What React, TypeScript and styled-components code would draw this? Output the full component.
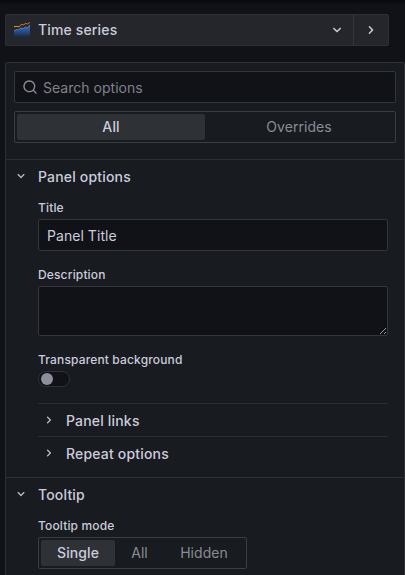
import React from 'react';
import styled, { createGlobalStyle, css } from 'styled-components';

const GlobalStyle = createGlobalStyle`
  *, *::before, *::after { box-sizing: border-box; }
  body {
    margin: 0;
    background: #111217;
    color: rgb(204, 204, 220);
    font-family: Inter, "Liberation Sans", sans-serif;
    font-size: 14px;
    line-height: 22px;
    letter-spacing: 0.15px;
    overflow: hidden;
  }
`;

const Page = styled.div`
  height: 575px;
  padding: 14px 0 0 5px;
  display: flex;
  flex-direction: column;
  gap: 16px;
  overflow: hidden;
  background: linear-gradient(#08090c, #111217 5px);
`;

const VizBar = styled.div`
  display: flex;
  flex: none;
  width: 384px;
  height: 32px;
  border: 1px solid #2e3036;
  border-radius: 2px;
  background: #24262b;
`;

const VizPicker = styled.button`
  flex: 1;
  display: flex;
  align-items: center;
  padding: 0 7px 0 8px;
  border: 0;
  background: none;
  color: inherit;
  font: inherit;
  font-weight: 500;
  letter-spacing: inherit;
  text-align: left;
`;

const VizName = styled.span`
  flex: 1;
  margin-left: 8px;
`;

const CollapseButton = styled.button`
  width: 35px;
  display: flex;
  align-items: center;
  justify-content: center;
  padding: 0;
  border: 0;
  border-left: 1px solid #34363c;
  background: none;
  color: inherit;
`;

const Panel = styled.div`
  flex: none;
  width: 400px;
  height: 520px;
  border: 1px solid #2d2f35;
  border-radius: 2px 2px 0 0;
  background: #181b1f;
`;

const Filters = styled.div`
  display: flex;
  flex-direction: column;
  gap: 8px;
  height: 96px;
  padding: 8px;
`;

const field = css`
  border: 1px solid #34363b;
  border-radius: 2px;
  background: #111217;
`;

const SearchBox = styled.label`
  ${field}
  display: flex;
  align-items: center;
  gap: 5px;
  height: 32px;
  width: 382px;
  flex: none;
  padding: 0 7px;
`;

const SearchInput = styled.input`
  flex: 1;
  padding: 2px 0 0;
  border: 0;
  outline: 0;
  background: none;
  color: inherit;
  font: inherit;
  letter-spacing: 0.02px;
  &::placeholder { color: #80818c; opacity: 1; }
`;

const RadioGroup = styled.div<{ $full?: boolean }>`
  display: flex;
  width: ${p => (p.$full ? '382px' : '209px')};
  height: 32px;
  flex: none;
  margin-top: ${p => (p.$full ? 0 : 1)}px;
  padding: 2px;
  border: 1px solid #3b3d43;
  border-radius: 2px;
`;

const RadioOption = styled.button<{ $active?: boolean; $width: number }>`
  width: ${p => p.$width}px;
  flex: none;
  padding: 0;
  border: 0;
  border-radius: 2px;
  background: ${p => (p.$active ? '#2e3136' : 'transparent')};
  color: ${p => (p.$active ? 'rgb(204, 204, 220)' : '#8b8c96')};
  font: inherit;
  font-weight: ${p => (p.$active ? 500 : 400)};
  letter-spacing: ${p => (p.$active ? 0.1 : 0.05)}px;
`;

const Section = styled.section`
  border-top: 1px solid #2d2f35;
`;

const SectionHeader = styled.header`
  display: flex;
  align-items: center;
  gap: 9px;
  height: 34px;
  padding-left: 7px;
  font-weight: 500;
  letter-spacing: 0.18px;
  svg { margin-bottom: 2px; }
`;

const SectionBody = styled.div`
  padding: 4px 16px 8px 32px;
`;

const Field = styled.div<{ $gap?: number }>`
  display: flex;
  flex-direction: column;
  align-items: flex-start;
  margin-bottom: ${p => p.$gap ?? 16}px;
`;

const FieldLabel = styled.label`
  height: 20px;
  font-size: 12px;
  font-weight: 500;
  line-height: 20px;
`;

const TextInput = styled.input`
  ${field}
  width: 350px;
  height: 32px;
  margin-top: 1px;
  padding: 0 8px;
  outline: 0;
  color: inherit;
  font: inherit;
  letter-spacing: 0.05px;
`;

const TextArea = styled.textarea`
  ${field}
  display: block;
  width: 350px;
  height: 50px;
  margin-top: 1px;
  outline: 0;
  color: inherit;
  color-scheme: dark;
`;

const Switch = styled.span`
  display: flex;
  align-items: center;
  width: 32px;
  height: 16px;
  margin-top: 1px;
  padding-left: 2px;
  border: 1px solid #2f3137;
  border-radius: 8px;
  background: #111217;
`;

const Knob = styled.span`
  width: 12px;
  height: 12px;
  border-radius: 50%;
  background: #8e8e9a;
`;

const SubSection = styled.div`
  display: flex;
  align-items: center;
  gap: 9px;
  height: 33px;
  padding: 2px 0 0 3px;
  border-top: 1px solid #2d2f35;
  font-weight: 500;
  letter-spacing: 0.18px;
  svg { margin-bottom: 2px; }
`;

const paths = {
  down: 'M17,9.17a1,1,0,0,0-1.41,0L12,12.71,8.46,9.17a1,1,0,0,0-1.41,0,1,1,0,0,0,0,1.42l4.24,4.24a1,1,0,0,0,1.42,0L17,10.59A1,1,0,0,0,17,9.17Z',
  right: 'M14.83,11.29,10.59,7.05a1,1,0,0,0-1.42,0,1,1,0,0,0,0,1.41L12.71,12,9.17,15.54a1,1,0,0,0,0,1.41,1,1,0,0,0,.71.29,1,1,0,0,0,.71-.29l4.24-4.24A1,1,0,0,0,14.83,11.29Z',
  search: 'M21.71,20.29,18,16.61A9,9,0,1,0,16.61,18l3.68,3.68a1,1,0,0,0,1.42,0A1,1,0,0,0,21.71,20.29ZM11,18a7,7,0,1,1,7-7A7,7,0,0,1,11,18Z',
};

const Icon = ({ name, size = 16, color = 'currentColor' }: { name: keyof typeof paths; size?: number; color?: string }) => (
  <svg width={size} height={size} viewBox="0 0 24 24" fill={color}>
    <path d={paths[name]} />
  </svg>
);

const TimeSeriesIcon = () => (
  <svg width="16" height="16" viewBox="0 0 16 16">
    <defs>
      <linearGradient id="area" x1="0" y1="0" x2="0" y2="1">
        <stop offset="0" stopColor="#3f70bd" />
        <stop offset="0.5" stopColor="#2c4f8a" />
        <stop offset="1" stopColor="#1c2a48" />
      </linearGradient>
      <linearGradient id="trend" x1="0" y1="0" x2="1" y2="0">
        <stop offset="0" stopColor="#f2b705" />
        <stop offset="1" stopColor="#e07b28" />
      </linearGradient>
    </defs>
    <path d="M0 9L2.5 7.6L4.5 7.8L7 5.8L9 6.8L11.5 4.8L13 6L16 3V14.8H0Z" fill="url(#area)" />
    <path d="M0 9L2.5 7.6L4.5 7.8L7 5.8L9 6.8L11.5 4.8L13 6L16 3" fill="none" stroke="#6394dc" strokeWidth="0.7" />
    <path d="M0 4.6L3 4.4L5 4.8L7.5 2.2L9.5 3L11.5 1.4L13.5 2L16 0.4" fill="none" stroke="url(#trend)" strokeWidth="0.9" />
  </svg>
);

export default function App() {
  return (
    <>
      <GlobalStyle />
      <Page>
        <VizBar>
          <VizPicker>
            <TimeSeriesIcon />
            <VizName>Time series</VizName>
            <Icon name="down" size={18} />
          </VizPicker>
          <CollapseButton aria-label="Collapse">
            <Icon name="right" size={18} />
          </CollapseButton>
        </VizBar>
        <Panel>
          <Filters>
            <SearchBox>
              <Icon name="search" color="#8b8c97" />
              <SearchInput placeholder="Search options" />
            </SearchBox>
            <RadioGroup $full>
              <RadioOption $active $width={188}>All</RadioOption>
              <RadioOption $width={188}>Overrides</RadioOption>
            </RadioGroup>
          </Filters>
          <Section>
            <SectionHeader><Icon name="down" color="#b9b9c8" />Panel options</SectionHeader>
            <SectionBody>
              <Field $gap={14}>
                <FieldLabel>Title</FieldLabel>
                <TextInput defaultValue="Panel Title" />
              </Field>
              <Field $gap={14}>
                <FieldLabel>Description</FieldLabel>
                <TextArea />
              </Field>
              <Field>
                <FieldLabel>Transparent background</FieldLabel>
                <Switch role="switch" aria-checked="false"><Knob /></Switch>
              </Field>
              <SubSection><Icon name="right" color="#b9b9c8" />Panel links</SubSection>
              <SubSection><Icon name="right" color="#b9b9c8" />Repeat options</SubSection>
            </SectionBody>
          </Section>
          <Section>
            <SectionHeader><Icon name="down" color="#b9b9c8" />Tooltip</SectionHeader>
            <SectionBody>
              <Field>
                <FieldLabel>Tooltip mode</FieldLabel>
                <RadioGroup>
                  <RadioOption $active $width={74}>Single</RadioOption>
                  <RadioOption $width={49}>All</RadioOption>
                  <RadioOption $width={80}>Hidden</RadioOption>
                </RadioGroup>
              </Field>
            </SectionBody>
          </Section>
        </Panel>
      </Page>
    </>
  );
}
